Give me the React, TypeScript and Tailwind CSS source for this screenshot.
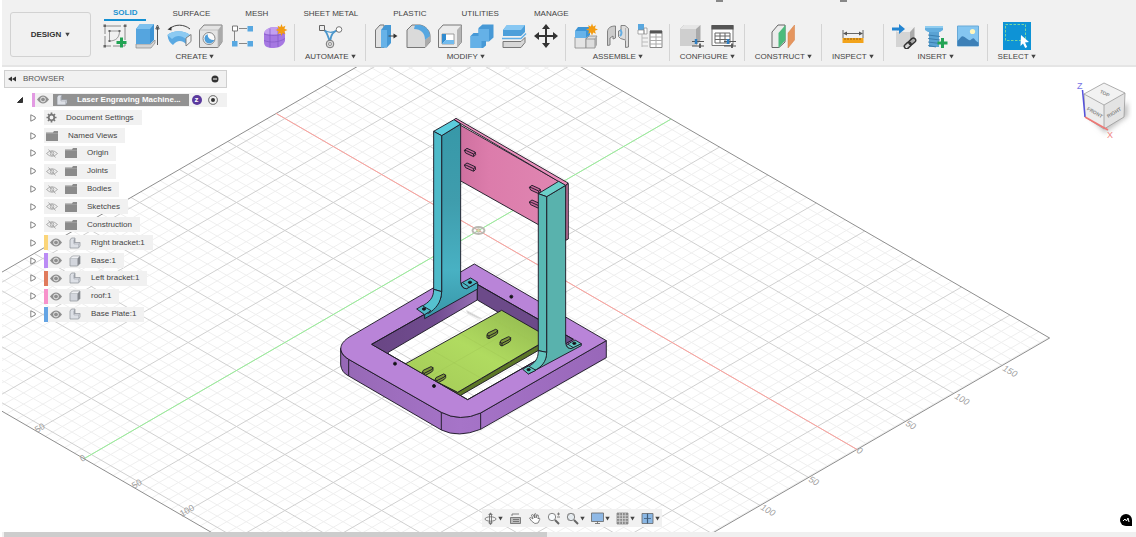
import React from "react";

const TABS = ["SOLID", "SURFACE", "MESH", "SHEET METAL", "PLASTIC", "UTILITIES", "MANAGE"];

const Caret = () => (
  <svg width="5" height="5" viewBox="0 0 5 5" className="shrink-0">
    <path d="M.3.700h4.400L2.500 4.500z" fill="#444" />
  </svg>
);

const Icon = ({ children }: { children: React.ReactNode }) => (
  <svg width="26" height="26" viewBox="0 0 26 26" fill="none" strokeLinejoin="round">
    {children}
  </svg>
);

const Spark = ({ x, y }: { x: number; y: number }) => (
  <path
    transform={`translate(${x} ${y})`}
    d="M0-6 1.200-3 3.900-4.200 2.900-1.300 6 0 2.900 1.300 3.900 4.200 1.200 3 0 6-1.200 3-3.900 4.200-2.900 1.300-6 0-2.900-1.300-3.900-4.200-1.200-3z"
    fill="#f39c12"
  />
);

const Plus = ({ x, y }: { x: number; y: number }) => (
  <path transform={`translate(${x} ${y})`} d="M0-5v10M-5 0h10" stroke="#23a455" strokeWidth="3" />
);

const SketchIcon = () => (
  <Icon>
    <path d="M3 3h20v20H3z" stroke="#888" strokeDasharray="16 2" />
    <path d="M7.500 8v10M7.500 8h10M17.500 8c0 6-3 10-10 10" stroke="#999" />
    <path d="M1.500 1.500h2.500v2.500h-2.500zM22 1.500h2.500v2.500H22zM1.500 22h2.500v2.500h-2.500zM6.500 7h2v2h-2zM16.500 7h2v2h-2zM6.500 17h2v2h-2z" fill="#666" />
    <Plus x={19.500} y={19.500} />
  </Icon>
);

const ExtrudeIcon = () => (
  <Icon>
    <path d="M2 21h15l4-4v3l-4 5H2z" fill="#d4d4d4" stroke="#888" strokeWidth=".7" />
    <path d="M2 6 6 1h14v16l-4 4H2z" fill="#3d93d4" />
    <path d="M2 6 6 1h14l-4 5z" fill="#7fc1ee" />
    <path d="M2 6h14v15H2z" fill="#55a5df" />
    <path d="M23.500 22V4M21.800 6l1.700-4 1.700 4z" stroke="#444" strokeWidth=".9" />
  </Icon>
);

const RevolveIcon = () => (
  <Icon>
    <path d="M1.500 12C7 7 18 7 24 12l-4 9c-4-4-9-4-13 1C4 20 2 17 1.500 12z" fill="#5aa9e2" />
    <path d="M1.500 12C7 7 18 7 24 12l-4 4C15 12 10 12 6 16z" fill="#8ccaf2" />
    <path d="m20 15 5-3.500v7L20 23z" fill="#f2f2f2" stroke="#777" strokeWidth=".9" />
    <path d="M4 5.500C9 1 18 1 24 6" stroke="#444" />
    <path d="m1.500 6.500 4-3v4z" fill="#333" />
  </Icon>
);

const HoleIcon = () => (
  <Icon>
    <path d="M1.500 7 6 2h18v17l-4 5.500H1.500z" fill="#e4e4e4" stroke="#808080" />
    <path d="M20 7v17.500L24 19V2z" fill="#aaa" />
    <path d="M1.500 7H20v17.500" stroke="#bbb" strokeWidth=".8" />
    <circle cx="11" cy="15.500" r="6" fill="#fafafa" stroke="#888" />
    <path d="M9.500 11a6 6 0 0 0 7 6 6 6 0 0 1-7.500 3 5 5 0 0 1 .5-9z" fill="#4f9fda" />
  </Icon>
);

const PatternIcon = () => (
  <Icon>
    <path d="M4.500 8v10M9 5.500h8M9 20.500h8" stroke="#888" />
    <path d="M2.500 3h5v5h-5z" stroke="#777" fill="#fff" />
    <path d="M17.500 3h5.500v5.500h-5.500zM2 18h5.500v5.500H2zM17.500 18h5.500v5.500h-5.500z" fill="#58a8e1" />
  </Icon>
);

const FormIcon = () => (
  <Icon>
    <path d="M2 10c2-5 7-6 12-6 6 0 9 3 9 8v6c-2 5-6 6.500-11 7-7 0-10-1.500-10-6z" fill="#a678e2" />
    <path d="M2 10c2-5 7-6 12-6 5 0 7 2 9 4-3 3-5 3.500-10 3.500-5 0-8 .5-11-1.500z" fill="#c3a0f0" />
    <path d="M8 5.500v19M16 5v19M2 17.500c6 2.500 15 2 21-2M2 11c6 2 15 2 21-1" stroke="#8357c4" strokeWidth=".7" />
    <Spark x={19.500} y={7} />
  </Icon>
);

const AutomateIcon = () => (
  <Icon>
    <path d="M5 6c5 2 5 5 8 13 1-8 3-10 8-12" stroke="#4c97cc" strokeWidth="1.800" />
    <path d="M6 6c4 4 10 4 15 1" stroke="#4c97cc" strokeWidth="1.500" />
    <path d="M2.500 2.500h5v5h-5z" fill="#eee" stroke="#666" />
    <circle cx="22" cy="6.500" r="2.800" fill="#fff" stroke="#777" />
    <circle cx="13" cy="21" r="3.800" fill="#ddd" stroke="#777" />
    <circle cx="13" cy="21" r="1.600" stroke="#888" strokeWidth=".8" />
  </Icon>
);

const PressPullIcon = () => (
  <Icon>
    <path d="M2.500 7 7 2h4v22.500H2.500z" fill="#e2e2e2" stroke="#777" />
    <path d="m8 7 4-5h6v18l-4 4.500H8z" fill="#4598d5" />
    <path d="M8 7h6v17.500H8z" fill="#66b2e8" />
    <path d="M15.500 13H22" stroke="#444" />
    <path d="m20.500 10.500 4 2.500-4 2.500z" fill="#333" />
  </Icon>
);

const FilletIcon = () => (
  <Icon>
    <path d="M2 7 7 2h8c6 1 10 6 10 11v6l-5 5.500H2z" fill="#dadada" stroke="#777" />
    <path d="M20 17v7.500l5-5.500v-6z" fill="#aaa" />
    <path d="M10 2h5c6 1 10 6 10 11l-5 4C20 10 16 6 9 6z" fill="#56a7e1" />
  </Icon>
);

const ShellIcon = () => (
  <Icon>
    <path d="M1.500 7 6 2h18.500v17L20 24.500H1.500z" fill="#ececec" stroke="#777" />
    <path d="M20 7v17.500l4.500-5.500V2z" fill="#b5b5b5" />
    <path d="M5 11h12v10H5z" fill="#fff" stroke="#888" strokeWidth=".8" />
    <path d="M5 11h4v6l-4 4z" fill="#328cd0" />
    <path d="m5 21 4-4h8v4z" fill="#72bbee" />
  </Icon>
);

const CombineIcon = () => (
  <Icon>
    <path d="m1.500 13 3-3h5V5l4-3.500h11v13L20 18.500h-3v4L14 25H1.500z" fill="#4799d6" />
    <path d="M1.500 13h11v12h-11zM9.500 6H20v12H9.500z" fill="#65b1e7" />
  </Icon>
);

const SplitIcon = () => (
  <Icon>
    <path d="m2 7 4-5h18v7l-4 4H2z" fill="#4d9fda" />
    <path d="m2 7 4-5h18l-4 5z" fill="#88c8f3" />
    <path d="M1 15.500h19L25 10.500" stroke="#60aee6" strokeWidth="1.500" />
    <path d="M2 18.500h18l4-4v5l-4 5H2z" fill="#d7d7d7" stroke="#777" />
  </Icon>
);

const MoveIcon = () => (
  <Icon>
    <path d="M13 4v18M4 13h18" stroke="#333" strokeWidth="2" />
    <path d="m13 1 4 5H9zM13 25l4-5H9zM1 13l5-4v8zM25 13l-5-4v8z" fill="#333" />
  </Icon>
);

const ComponentIcon = () => (
  <Icon>
    <path d="M2 14h11v11H2z" fill="#e4e4e4" stroke="#888" strokeWidth=".8" />
    <path d="M13 16h9v9h-9zl3-3h8l-2 3" fill="#ddd" stroke="#888" strokeWidth=".8" />
    <path d="m22 16 2-3v9l-2 3z" fill="#aaa" />
    <path d="m2 8 3-4h12v8l-4 3H2z" fill="#3f95d5" />
    <path d="M2 8h11v7H2z" fill="#67b3e9" />
    <Spark x={19} y={6.500} />
  </Icon>
);

const JointIcon = () => (
  <Icon>
    <path d="M2.500 9c0-4 3-6 8-6v12l-2.500 1v-3l-3 2v7l-2.500.5z" fill="#ccc" stroke="#777" strokeWidth=".9" />
    <path d="M13.500 8 16 7V2.500h4l3.500 3V24l-3 .5V17l-5-1.500-2-2z" fill="#ddd" stroke="#777" strokeWidth=".9" />
    <path d="M20.500 5v13" stroke="#aaa" strokeWidth=".8" />
    <path d="M15 7c2 1 2 4 0 6" stroke="#65ade2" strokeWidth="2" />
  </Icon>
);

const TableTreeIcon = () => (
  <Icon>
    <path d="M1 1h6v6H1z" fill="#58a7df" />
    <path d="M1 7h6v4H1zM7 5h3v6H7z" fill="#fff" stroke="#888" strokeWidth=".7" />
    <path d="M5 11v13M5 15h6M5 19h6M5 23h6" stroke="#bbb" />
    <path d="M13 8h12v16.500H13z" fill="#fff" stroke="#888" />
    <path d="M13 7.500h12v3H13z" fill="#555" />
    <path d="M13 14h12M13 17.500h12M13 21h12M19 10v14" stroke="#aaa" />
  </Icon>
);

const Sliders = () => (
  <>
    <path d="M14 18.500h12M14 23h12" stroke="#555" strokeWidth="1.200" />
    <path d="M18 16v5" stroke="#2f7fc3" strokeWidth="2.500" />
    <path d="M22 20.500V25" stroke="#555" strokeWidth="1.800" />
  </>
);

const ConfigureIcon = () => (
  <Icon>
    <path d="m2 6 4-4h16.500v15L18 23H2z" fill="#aaa" />
    <path d="m2 6 4-4h16.500L18 6z" fill="#e6e6e6" />
    <path d="M2 6h16v17H2z" fill="#cfcfcf" />
    <Sliders />
  </Icon>
);

const ConfigTableIcon = () => (
  <Icon>
    <path d="M2 2.500h21v20H2z" fill="#fff" stroke="#777" />
    <path d="M1.500 2h22v4.500h-22z" fill="#555" />
    <path d="M5 10h15v10H5zM5 13h15M5 16.500h15M10 10v10M15 10v10" stroke="#666" />
    <Sliders />
  </Icon>
);

const PlaneIcon = () => (
  <Icon>
    <path d="m2 9 6-7h7v17l-6 5.500H2z" fill="#ececec" stroke="#666" />
    <path d="M8.500 10 15.500 2v15l-7 8z" fill="#4cbb7c" />
    <path d="m18 10 6.500-8v15L18 25z" fill="#e5955e" stroke="#d57c41" strokeWidth=".5" />
  </Icon>
);

const MeasureIcon = () => (
  <Icon>
    <path d="M3 7v8M23 7v8M4 10.500h18" stroke="#666" />
    <path d="m3 10.500 4-2v4zM23 10.500l-4-2v4z" fill="#555" />
    <path d="M2.500 15h21v5h-21z" fill="#f2a31b" />
    <path d="M5 15v2M8 15v2M11 15v2M14 15v2M17 15v2M20 15v2" stroke="#825010" strokeWidth=".8" />
  </Icon>
);

const InsertIcon = () => (
  <Icon>
    <path d="M5 9 9 4h14.500v14L19 24H5z" fill="#aaa" />
    <path d="m5 9 4-5h14.500L19 9z" fill="#eee" />
    <path d="M5 9h14v15H5z" fill="#d4d4d4" />
    <path d="M1 6h8" stroke="#2485d1" strokeWidth="3" />
    <path d="m8 1 6 5-6 5z" fill="#2485d1" />
    <g stroke="#333" strokeWidth="1.500" transform="rotate(-42 19 20)">
      <rect x="12" y="18" width="7.500" height="4.500" rx="2.200" />
      <rect x="18" y="18" width="7.500" height="4.500" rx="2.200" />
    </g>
  </Icon>
);

const BoltIcon = () => (
  <Icon>
    <path d="M2 3h18v4l-3 2H5L2 7z" fill="#65afdf" />
    <path d="M2 3h18v2H2z" fill="#90cdf0" />
    <path d="M6 9h10v15H6z" fill="#5aa3d4" />
    <path d="m5 12 12 1.500M5 15.500l12 1.500M5 19l12 1.500M5 22.500l8 1.500" stroke="#3275a4" strokeWidth=".8" />
    <Plus x={19.500} y={20} />
  </Icon>
);

const ImageIcon = () => (
  <Icon>
    <path d="M2.500 3h21v20h-21z" fill="#85c6f1" stroke="#68a9d7" />
    <circle cx="17.500" cy="8.500" r="2.600" fill="#fff6bd" />
    <path d="M2.500 18c4-4 4-6 7-4s5 4 6 3 3-3 4-1 3 3 4 3.500V23h-21z" fill="#3d80b7" />
  </Icon>
);

const SelectIcon = () => (
  <svg width="28" height="28" viewBox="0 0 28 28">
    <path d="M0 0h28v28H0z" fill="#0e93d6" />
    <path d="M2.500 2.500h20v16h-20z" fill="none" stroke="#77d6a0" strokeDasharray="2.500 1.500" />
    <path d="m18 13 8 7-4 .4 2.200 4.600-2 1-2.200-4.600-2.500 2.600z" fill="#fff" />
  </svg>
);

const GROUPS: { label: string; icons: React.FC[] }[] = [
  { label: "CREATE", icons: [SketchIcon, ExtrudeIcon, RevolveIcon, HoleIcon, PatternIcon, FormIcon] },
  { label: "AUTOMATE", icons: [AutomateIcon] },
  { label: "MODIFY", icons: [PressPullIcon, FilletIcon, ShellIcon, CombineIcon, SplitIcon, MoveIcon] },
  { label: "ASSEMBLE", icons: [ComponentIcon, JointIcon, TableTreeIcon] },
  { label: "CONFIGURE", icons: [ConfigureIcon, ConfigTableIcon] },
  { label: "CONSTRUCT", icons: [PlaneIcon] },
  { label: "INSPECT", icons: [MeasureIcon] },
  { label: "INSERT", icons: [InsertIcon, BoltIcon, ImageIcon] },
  { label: "SELECT", icons: [SelectIcon] },
];

function Toolbar() {
  return (
    <header className="relative flex shrink-0 items-start border-b-2 border-[#e5e5e5] bg-[#f1f1f1] pb-[2px]">
      {/* bottoms of the buttons in the bar above */}
      <div className="absolute top-0 left-[714px] h-[2px] w-[7px] bg-[#888]" />
      <div className="absolute top-0 left-[838px] h-[2px] w-[7px] bg-[#888]" />
      <button className="mt-3 mr-1 ml-2 flex h-[45px] w-[81px] shrink-0 items-center justify-center gap-1 rounded-[3px] border border-[#d2d2d2] text-[8px] font-bold text-[#333]">
        DESIGN <Caret />
      </button>
      <div>
        <nav className="flex gap-[17px] pt-[6px] pl-[9px]">
          {TABS.map((tab, i) => (
            <button
              key={tab}
              className={
                i === 0
                  ? "h-[15px] border-b-2 border-[#1390d2] px-[9px] text-[8px] leading-[13px] font-bold text-[#1c93d2]"
                  : "h-[15px] px-[9px] text-[8px] leading-[13px] text-[#444]"
              }
            >
              {tab}
            </button>
          ))}
        </nav>
        <div className="flex pt-px">
          {GROUPS.map((group, i) => (
            <div key={group.label} className="relative px-1">
              <div className="flex h-7 justify-center">
                {group.icons.map((GroupIcon, n) => (
                  <button
                    key={n}
                    aria-label={`${group.label} ${n + 1}`}
                    className="flex w-8 items-center justify-center"
                  >
                    <GroupIcon />
                  </button>
                ))}
              </div>
              <button className="flex h-[13px] w-full items-center justify-center gap-[2px] px-[6px] text-[8px] text-[#444]">
                {group.label} <Caret />
              </button>
              {i < GROUPS.length - 1 && <div className="absolute top-[2px] right-0 bottom-[2px] w-px bg-[#d4d4d4]" />}
            </div>
          ))}
        </div>
      </div>
    </header>
  );
}

const Eye = ({ hidden }: { hidden?: boolean }) =>
  hidden ? (
    <svg width="12" height="9" viewBox="0 0 12 9" fill="none" stroke="#a3a3a3" strokeWidth=".9">
      <path d="M.5 4.500Q6-1 11.500 4.500 6 10 .5 4.500z" />
      <circle cx="6" cy="4.500" r="1.800" />
      <path d="m2.500.5 7 8" />
    </svg>
  ) : (
    <svg width="12" height="9" viewBox="0 0 12 9">
      <path d="M0 4.500Q6-3.500 12 4.500 6 12.500 0 4.500z" fill="#8f8f8f" />
      <circle cx="6" cy="4.500" r="2.400" fill="#8f8f8f" stroke="#f1f1f1" strokeWidth=".9" />
    </svg>
  );

const Folder = () => (
  <svg width="12" height="10" viewBox="0 0 12 10">
    <path d="M0 1.500h7L8 0h4v10H0z" fill="#8b8b8b" />
    <path d="M0 2.500h12" stroke="#a9a9a9" strokeWidth=".6" />
  </svg>
);

const Gear = () => (
  <svg width="11" height="11" viewBox="-5.500 -5.500 11 11" fill="none" stroke="#777">
    <circle r="2.800" strokeWidth="1.800" />
    <path
      d="M0-5v2M0 3v2M-5 0h2M3 0h2M-3.500-3.500-2.200-2.200M2.200 2.200 3.500 3.500M3.500-3.500 2.200-2.200M-2.200 2.200-3.500 3.500"
      strokeWidth="1.700"
    />
  </svg>
);

const Assembly = () => (
  <svg width="12" height="12" viewBox="0 0 12 12" strokeLinejoin="round">
    <path d="m1 3 1.500-2h3.500v4.500h5v3.500l-1.500 2H1z" fill="#dde0e6" stroke="#8b8f96" strokeWidth=".7" />
    <path d="M4.600 3 6 1v5L4.600 7z" fill="#9da1a9" />
    <path d="M5 7h4.500v4M9.500 7 11 5.500" fill="none" stroke="#a6aab1" strokeWidth=".6" />
  </svg>
);

const Body = () => (
  <svg width="12" height="12" viewBox="0 0 12 12" strokeLinejoin="round">
    <path d="M1 3.500 3.500 1H11v7.500L8.500 11H1z" fill="#85888e" stroke="#8b8f96" strokeWidth=".7" />
    <path d="M1.300 3.500 3.600 1.300h7L8.500 3.500z" fill="#f0f1f4" />
    <path d="M1.300 3.600h7.200v7.100H1.300z" fill="#d3d6dd" />
  </svg>
);

type NodeKind = "gear" | "folder" | "hidden" | "assembly" | "body";

const NODES: { name: string; kind: NodeKind; color?: string }[] = [
  { name: "Document Settings", kind: "gear" },
  { name: "Named Views", kind: "folder" },
  { name: "Origin", kind: "hidden" },
  { name: "Joints", kind: "hidden" },
  { name: "Bodies", kind: "hidden" },
  { name: "Sketches", kind: "hidden" },
  { name: "Construction", kind: "hidden" },
  { name: "Right bracket:1", kind: "assembly", color: "bg-[#fbd579]" },
  { name: "Base:1", kind: "body", color: "bg-[#bb8cf5]" },
  { name: "Left bracket:1", kind: "assembly", color: "bg-[#e07b5c]" },
  { name: "roof:1", kind: "body", color: "bg-[#f792cb]" },
  { name: "Base Plate:1", kind: "assembly", color: "bg-[#64a4e4]" },
];

function TreeNode({ name, kind, color }: { name: string; kind: NodeKind; color?: string }) {
  return (
    <li className="flex flex-1 items-center pl-[26px]">
      <button aria-label={`Expand ${name}`} className="w-[14px]">
        <svg width="6" height="8" viewBox="0 0 6 8">
          <path d="M.8.8v6.400L5.200 5V3z" fill="#fff" stroke="#777" strokeWidth=".9" />
        </svg>
      </button>
      <div className="flex h-[15px] items-center bg-[#f1f1f1] pr-2 text-[8px] text-[#444]">
        {color && <span className={`h-full w-1 ${color}`} />}
        {kind === "gear" && <span className="mr-[9px] ml-[2px]"><Gear /></span>}
        {kind === "folder" && <span className="mr-[10px] ml-[2px]"><Folder /></span>}
        {kind === "hidden" && (
          <>
            <button aria-label={`Show ${name}`} className="mr-[7px] ml-[2px]"><Eye hidden /></button>
            <span className="mr-[10px]"><Folder /></span>
          </>
        )}
        {color && (
          <>
            <button aria-label={`Hide ${name}`} className="mr-[7px] ml-[2px]"><Eye /></button>
            <span className="mr-[10px]">{kind === "body" ? <Body /> : <Assembly />}</span>
          </>
        )}
        {name}
      </div>
    </li>
  );
}

function Browser() {
  return (
    <aside className="relative ml-[2px] w-[223px] pt-[3px]">
      <div className="flex h-[18px] items-center border border-[#cfcfcf] bg-[#f1f1f1] px-[3px] text-[8px] text-[#555]">
        <svg width="8" height="6" viewBox="0 0 8 6" className="mr-[7px]">
          <path d="M4 .5v5L0 3zM8 .5v5L4 3z" fill="#333" />
        </svg>
        BROWSER
        <button aria-label="Minimize" className="mr-1 ml-auto">
          <svg width="8" height="8" viewBox="0 0 8 8">
            <circle cx="4" cy="4" r="3.500" fill="#333" />
            <path d="M2 4h4" stroke="#fff" />
          </svg>
        </button>
      </div>
      <ul className="mt-[3px] flex h-[232px] flex-col">
        <li className="flex flex-1 items-center pl-[13px]">
          <button aria-label="Collapse" className="w-[15px]">
            <svg width="6" height="6" viewBox="0 0 6 6">
              <path d="M5.500.5v5h-5z" fill="#333" stroke="#333" />
            </svg>
          </button>
          <div className="flex h-[14px] flex-1 items-center bg-[#f1f1f1]">
            <span className="mr-[2px] h-full w-[3px] bg-[#e39ae3]" />
            <button aria-label="Hide all" className="mr-1"><Eye /></button>
            <div className="flex h-3 items-center bg-[#929292] pr-2 text-[8px] font-bold whitespace-nowrap text-white">
              <span className="mr-[9px] ml-[3px]"><Assembly /></span>
              Laser Engraving Machine...
            </div>
            <span className="ml-[3px] flex size-[10px] items-center justify-center rounded-full bg-[#5b3a9d] text-[8px] leading-none font-bold text-white">
              z
            </span>
            <input
              type="radio"
              aria-label="Activate component"
              defaultChecked
              className="ml-[6px] size-[10px] appearance-none rounded-full border border-[#888] bg-[#333] shadow-[inset_0_0_0_2px_#f1f1f1]"
            />
          </div>
        </li>
        {NODES.map((node) => (
          <TreeNode key={node.name} {...node} />
        ))}
      </ul>
    </aside>
  );
}

// Ground plane: one major cell is 50 units, U runs along the red axis and V along the green one
const CELL_X = 48.4;
const CELL_Y = 28;
const U_MIN = -4.18;
const U_MAX = 7.82;
const V_MIN = -8.15;
const V_MAX = 3.98;

const project = (u: number, v: number) => [478.5 + (u + v) * CELL_X, 230.5 + (u - v) * CELL_Y];

const segment = (u1: number, v1: number, u2: number, v2: number) =>
  `M${project(u1, v1).join(" ")}L${project(u2, v2).join(" ")}`;

function gridPath(major: boolean) {
  let d = "";
  for (let i = -41; i <= 39; i++) {
    if ((i % 5 === 0) !== major) continue;
    const t = i / 5;
    if (t > U_MIN && t < U_MAX) d += segment(t, V_MIN, t, V_MAX);
    if (t > V_MIN && t < V_MAX) d += segment(U_MIN, t, U_MAX, t);
  }
  return d;
}

const EDGE_LABELS = [
  { text: "150", x: 1002, y: 370, angle: 30 },
  { text: "100", x: 954, y: 398, angle: 30 },
  { text: "50", x: 905, y: 425, angle: 30 },
  { text: "0", x: 856, y: 452, angle: 30 },
  { text: "50", x: 808, y: 481, angle: 30 },
  { text: "100", x: 760, y: 509, angle: 30 },
  { text: "50", x: 37, y: 433, angle: -30 },
  { text: "0", x: 82, y: 462, angle: -30 },
  { text: "50", x: 134, y: 489, angle: -30 },
  { text: "100", x: 182, y: 517, angle: -30 },
];

const PlateSlot = ({ x, y }: { x: number; y: number }) => (
  <g transform={`translate(${x} ${y})`}>
    <path d="M-16 2-13-4 10-15 16-12 16-4 12 1-10 13-16 10z" fill="#7d9639" />
    <path d="M-16 2-10 5 12-6 16-12M-10 5v8" fill="none" />
  </g>
);

const RoofSlot = ({ x, y }: { x: number; y: number }) => (
  <g transform={`translate(${x} ${y})`}>
    <path d="M-17-6-9-12 15-1 17 7 11 13-13 2z" fill="#c8669a" />
    <path d="M-17-6-11-5 11 5 17 0M11 5v7" fill="none" />
  </g>
);

function Model() {
  return (
    <g transform="translate(320 100) scale(0.3333)" stroke="#1d1a26" strokeWidth="2.800" strokeLinejoin="round">
      <defs>
        <linearGradient id="leftFace" x1="0" y1="0" x2="0" y2="1">
          <stop offset="0" stopColor="#3798a8" />
          <stop offset=".4" stopColor="#3f9dad" />
          <stop offset=".75" stopColor="#48b1c3" />
          <stop offset="1" stopColor="#3896a8" />
        </linearGradient>
        <linearGradient id="wall" x1="0" y1="0" x2="1" y2="0">
          <stop offset="0" stopColor="#694684" />
          <stop offset=".6" stopColor="#704b8f" />
          <stop offset="1" stopColor="#9670b5" />
        </linearGradient>
        <linearGradient id="roofFace" x1="0" y1="0" x2="1" y2="0">
          <stop offset="0" stopColor="#cd6f9e" />
          <stop offset=".3" stopColor="#dc7cab" />
          <stop offset="1" stopColor="#e087b2" />
        </linearGradient>
        <linearGradient id="plate" x1="0" y1="1" x2="1" y2="0">
          <stop offset="0" stopColor="#a3c957" />
          <stop offset=".5" stopColor="#b0db60" />
          <stop offset="1" stopColor="#8eb34d" />
        </linearGradient>
        <linearGradient id="baseSide" x1="0" y1="0" x2="1" y2="0">
          <stop offset="0" stopColor="#9668b5" />
          <stop offset=".45" stopColor="#a674c8" />
          <stop offset="1" stopColor="#9867b9" />
        </linearGradient>
        <clipPath id="opening">
          <path d="M155 733 472 553 760 718 443 899z" />
        </clipPath>
      </defs>

      {/* base */}
      <path
        d="M62 745V795Q65 818 86 828L364 990Q415 1015 482 988L859 773V722L482 939Q420 967 364 937L86 778Q62 765 62 745z"
        fill="url(#baseSide)"
      />
      <path d="M86 778V828M364 937V990M482 939V988" />
      <path
        d="M463 492 859 722 482 939Q420 967 364 937L86 778C54 757 54 732 90 710zM155 733 443 899 760 718 472 553z"
        fill="#b984d8"
        fillRule="evenodd"
      />
      <g clipPath="url(#opening)">
        <path d="M155 733 472 553V600L205 757V780z" fill="url(#wall)" />
        <path d="M472 553 760 718V770L472 600z" fill="#6c4a89" />
        <path d="m440 632 45 24-12-2-30-15z" fill="#ccc" stroke="#ddd" />
        <path d="M268 795 413 877 680 721V737L405 896z" fill="#5c7627" />
        <path d="M545 631 690 714 413 877 250 795z" fill="url(#plate)" />
        <path
          d="m340 753 144 82M425 703 570 786M510 652 655 735M330 830 600 675"
          stroke="#9fc554"
          strokeWidth="1.200"
        />
        <PlateSlot x={517} y={703} />
        <PlateSlot x={556} y={725} />
        <PlateSlot x={323} y={815} />
        <PlateSlot x={361} y={837} />
      </g>
      <path d="M155 733 443 899 760 718 472 553z" fill="none" />
      <g fill="#111">
        <circle cx="574" cy="590" r="4.500" />
        <circle cx="225" cy="791" r="4.500" />
        <circle cx="342" cy="858" r="4.500" />
      </g>

      {/* roof */}
      <path d="M408 68 737 256V420L408 235z" fill="url(#roofFace)" />
      <path d="M402 59 408 55 744 249 737 257z" fill="#ea8fbb" />
      <path d="M737 257 745 250V417L737 421z" fill="#c5759e" />
      <RoofSlot x={450} y={157} />
      <RoofSlot x={450} y={201} />
      <RoofSlot x={645} y={268} />
      <RoofSlot x={645} y={312} />

      {/* left bracket */}
      <path
        d="M365 107 422 72V545Q424 567 440 566L473 547V567L314 656V643L326 637Q365 614 365 575z"
        fill="url(#leftFace)"
      />
      <path d="M341 94 402 59 422 72 365 107z" fill="#5bcddd" />
      <path d="M341 94 365 107V575L341 568z" fill="#4ebac9" />
      <path d="M341 568 365 575C363 610 347 626 326 640L302 621C330 606 341 593 341 568z" fill="#55c1cf" />
      <path d="M290 627 307 617 333 632 314 644z" fill="#4fb7c5" />
      <path d="M424 549 452 534 473 547 440 566Q426 566 424 549z" fill="#4bb7c5" />
      <path d="M428 548 446 560" fill="none" />

      {/* right bracket */}
      <path
        d="M680 290 737 256V728Q739 746 753 745L784 731V737L625 822 640 809Q680 792 680 757z"
        fill="#59b2ad"
      />
      <path d="M655 281 716 244 737 256 680 290z" fill="#6bd0c9" />
      <path d="M655 281 680 290V757L655 752z" fill="#58b9b4" />
      <path d="M655 752 680 757C680 786 664 802 641 813L620 802C644 791 655 778 655 752z" fill="#62c5bf" />
      <path d="M608 808 625 798 648 811 625 822z" fill="#62c5bf" />
      <path d="M739 735 765 720 784 731 753 746Q742 746 739 735z" fill="#62c5bf" />
      <path d="M744 733 760 743" fill="none" />
      {[
        [312, 627],
        [450, 547],
        [626, 809],
        [763, 730],
      ].map(([x, y]) => (
        <ellipse key={x} cx={x} cy={y} rx="5" ry="3.500" fill="#111" />
      ))}
    </g>
  );
}

function Canvas() {
  return (
    <svg
      className="absolute inset-0 h-full w-full"
      viewBox="2 67 1134 465"
      preserveAspectRatio="xMidYMid slice"
      role="img"
      aria-label="Laser engraving machine model"
    >
      <path d={gridPath(false)} stroke="#efefef" strokeWidth="1" />
      <path d={gridPath(true)} stroke="#d0d0d0" strokeWidth="1" />
      <path
        d={`${segment(U_MIN, V_MIN, U_MIN, V_MAX)}${segment(U_MIN, V_MAX, U_MAX, V_MAX)}${segment(U_MAX, V_MAX, U_MAX, V_MIN)}${segment(U_MAX, V_MIN, U_MIN, V_MIN)}`}
        stroke="#8e8e8e"
        fill="none"
      />
      <path d={segment(U_MIN, 0, U_MAX, 0)} stroke="#ffa09b" />
      <path d={segment(0, V_MIN, 0, V_MAX)} stroke="#97f197" />
      {EDGE_LABELS.map(({ text, x, y, angle }) => (
        <text
          key={`${x}-${y}`}
          transform={`translate(${x} ${y}) rotate(${angle})`}
          fontSize="9"
          fontStyle={angle > 0 ? "italic" : "normal"}
          fill="#a0a0a0"
        >
          {text}
        </text>
      ))}
      <ellipse cx="478.500" cy="230.500" rx="6" ry="3.500" fill="none" stroke="#b9b9b2" strokeWidth="2" />
      <circle cx="478.500" cy="230.500" r="1.800" fill="#e3d9a5" stroke="#a7a79b" strokeWidth=".7" />
      <Model />
    </svg>
  );
}

const ViewCube = () => (
  <svg width="60" height="64" viewBox="0 0 60 64" className="absolute top-[11px] right-1" role="img" aria-label="View cube">
    <defs>
      <filter id="soft" x="-30%" y="-30%" width="160%" height="160%">
        <feGaussianBlur stdDeviation="2.500" />
      </filter>
    </defs>
    <path d="m13 34 20 21 23-17V24L33 40z" fill="#c2c2c2" filter="url(#soft)" />
    <path d="M12 16 32 5 53 15 32 27z" fill="#f2f2f2" />
    <path d="M12 16 32 27V51L13 39z" fill="#ededed" />
    <path d="M32 27 53 15 52 39 32 51z" fill="#e3e3e3" />
    <path
      d="M12 16 32 5 53 15 52 39 32 51 13 39zM12 16 32 27 53 15M32 27V51"
      fill="none"
      stroke="#9a9a9a"
      strokeWidth=".8"
    />
    <path d="M10.500 12 13 39" stroke="#5551dd" strokeWidth="1.500" />
    <path d="M13 39 36 52" stroke="#ef7774" strokeWidth="1.500" />
    <text x="5" y="11" fontSize="9" fill="#7774e5">Z</text>
    <text x="35" y="60" fontSize="9" fill="#f28582">X</text>
    <g fontSize="5" fontWeight="bold" fill="#8a8a8a" textAnchor="middle">
      <text transform="translate(32 17) rotate(25)">TOP</text>
      <text transform="translate(22 36) rotate(29)">FRONT</text>
      <text transform="translate(43 36) rotate(-31)">RIGHT</text>
    </g>
  </svg>
);

const NAV_ITEMS = [
  {
    name: "Orbit",
    menu: true,
    art: (
      <>
        <ellipse cx="6.500" cy="7" rx="5.500" ry="2.200" />
        <path d="M5.500 2v9M7.500 2v9" />
        <path d="m4 3 2.500-2.500L9 3zM4 10.500 6.500 13 9 10.500z" fill="#777" stroke="none" />
      </>
    ),
  },
  {
    name: "Look at",
    art: (
      <>
        <path d="M1.500 5.500h10v6h-10z" fill="#bbb" />
        <path d="M3 4V2h7M4 7.500h6M4 9.500h6" />
      </>
    ),
  },
  {
    name: "Pan",
    art: <path d="m3.500 9-2-3q1-1 2 0L5 7 3.500 3q1-1 2 0L6.500 6V2q1-1 1.500 0v4l1-3q1.500-.5 1.300 1L10 7l1-1q1 0 .7 1.500L10 11q-3 2-6.500-2z" fill="#fff" />,
  },
  {
    name: "Zoom",
    art: (
      <>
        <circle cx="5" cy="5" r="3.700" fill="#f8fbfd" />
        <path d="m8 8 4 4" strokeWidth="2" />
        <path d="M10 2h3M11.500.5v3M10 5h3" />
      </>
    ),
  },
  {
    name: "Fit",
    menu: true,
    art: (
      <>
        <circle cx="5" cy="5" r="3.700" fill="#e4eaee" />
        <path d="m8 8 4 4" strokeWidth="2" />
        <path d="M2 2h2M2 2v2M8 2H6M8 2v2M2 8V6M2 8h2" stroke="#999" />
      </>
    ),
  },
  {
    name: "Display settings",
    menu: true,
    art: (
      <>
        <path d="M.5 1h12v8.500H.5z" fill="#8fb9e6" />
        <path d="M4 11.500h5M6.500 9.500v2" />
      </>
    ),
  },
  {
    name: "Grid and snaps",
    menu: true,
    art: (
      <>
        <path d="M1 1h11v11H1z" fill="#8a8a8a" stroke="#888" />
        <path d="M1 3.750h11M1 6.500h11M1 9.250h11M3.750 1v11M6.500 1v11M9.250 1v11" stroke="#d5d5d5" />
      </>
    ),
  },
  {
    name: "Viewports",
    menu: true,
    art: (
      <>
        <path d="M1 1.500h11v10H1z" fill="#8ab7e4" />
        <path d="M6.500 1.500v10" stroke="#3f5c79" strokeWidth="1.200" />
        <path d="M3 6.500h7" stroke="#3f5c79" />
      </>
    ),
  },
];

function NavBar() {
  return (
    <div className="absolute inset-x-0 bottom-[5px] flex justify-center pl-[6px]">
      <div className="flex h-[18px] items-center gap-[6px] bg-[#f1f1f1] px-[2px]">
        {NAV_ITEMS.map(({ name, menu, art }) => (
          <button key={name} aria-label={name} className="flex items-center gap-px">
            <svg width="13" height="13" viewBox="0 0 13 13" fill="none" stroke="#666" strokeWidth=".8">
              {art}
            </svg>
            {menu && <Caret />}
          </button>
        ))}
      </div>
    </div>
  );
}

export default function App() {
  return (
    <div className="flex h-screen flex-col overflow-hidden bg-white pl-[2px] font-['Liberation_Sans',Arial,sans-serif]">
      <Toolbar />
      <main className="relative flex-1 overflow-hidden">
        <Canvas />
        <Browser />
        <ViewCube />
        <NavBar />
        <button
          aria-label="Assistant"
          className="absolute right-1 bottom-[6px] flex size-3 items-center justify-center rounded-full rounded-br-[2px] bg-black"
        >
          <svg width="8" height="8" viewBox="0 0 8 8" fill="none" stroke="#fff">
            <path d="m1 5 2-2 1.500 2L6 2l1 4" />
          </svg>
        </button>
      </main>
      <footer className="h-[5px] shrink-0 bg-[#f0f0f0] pl-[2px]">
        <div className="h-full w-[48%] bg-[#cdcdcd]" />
      </footer>
    </div>
  );
}
